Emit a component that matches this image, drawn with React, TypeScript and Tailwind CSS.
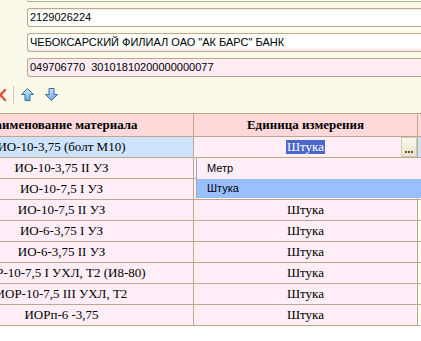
import React from "react";

const rows = [
  "ИО-10-3,75 II УЗ",
  "ИО-10-7,5 I УЗ",
  "ИО-10-7,5 II УЗ",
  "ИО-6-3,75 I УЗ",
  "ИО-6-3,75 II УЗ",
  "ИОР-10-7,5 I УХЛ, Т2 (И8-80)",
  "ИОР-10-7,5 III УХЛ, Т2",
  "ИОРп-6 -3,75",
];

function UpArrow() {
  return (
    <svg width="13" height="13" viewBox="0 0 13 13">
      <defs>
        <linearGradient id="ua" x1="0" y1="0" x2="0" y2="1">
          <stop offset="0" stopColor="#d6ecfc" />
          <stop offset="1" stopColor="#6aa8e0" />
        </linearGradient>
      </defs>
      <path d="M6.5 0.5 L12.5 6.5 L9 6.5 L9 12.5 L4 12.5 L4 6.5 L0.5 6.5 Z" fill="url(#ua)" stroke="#3b6e9e" strokeWidth="1" strokeLinejoin="round" />
    </svg>
  );
}

function DownArrow() {
  return (
    <svg width="13" height="13" viewBox="0 0 13 13">
      <defs>
        <linearGradient id="da" x1="0" y1="0" x2="0" y2="1">
          <stop offset="0" stopColor="#c8e2fa" />
          <stop offset="1" stopColor="#6aa8e0" />
        </linearGradient>
      </defs>
      <path d="M6.5 12.5 L12.5 6.5 L9 6.5 L9 0.5 L4 0.5 L4 6.5 L0.5 6.5 Z" fill="url(#da)" stroke="#3b6e9e" strokeWidth="1" strokeLinejoin="round" />
    </svg>
  );
}

export default function App() {
  const sans = { fontFamily: '"Liberation Sans", Arial, sans-serif' };
  const serif = { fontFamily: '"Liberation Serif", "Times New Roman", serif' };
  return (
    <div className="relative w-[421px] h-[341px] overflow-hidden bg-white" style={sans}>
      {/* form area */}
      <div className="h-[113px] bg-[#fbf9e9] flex flex-col">
        <div className="ml-[27px] h-[2px] border-b border-l border-[#baa98a] bg-white rounded-bl-[3px]" />
        <div className="mt-[6px] ml-[27px] h-[19px] border-y border-l border-[#baa98a] rounded-l-[3px] bg-white shadow-[inset_0_1px_0_#fde6f0] flex items-center pl-[2px] text-[11px] text-black leading-none">
          2129026224
        </div>
        <div className="mt-[6px] ml-[27px] h-[19px] border-y border-l border-[#baa98a] rounded-l-[3px] bg-white shadow-[inset_0_-2px_0_#fde6f0] flex items-center pl-[2px] text-[11px] text-black leading-none whitespace-nowrap">
          ЧЕБОКСАРСКИЙ ФИЛИАЛ ОАО "АК БАРС" БАНК
        </div>
        <div className="mt-[6px] ml-[27px] h-[19px] border-y border-l border-[#baa98a] rounded-l-[3px] bg-[#fdecf4] flex items-center pl-[2px] text-[11px] text-black leading-none whitespace-pre">
          049706770  30101810200000000077
        </div>
        <div className="flex items-start pt-[11px] h-[36px]">
          <svg width="6" height="13" viewBox="0 0 6 13" className="mt-[1px]">
            <path d="M-4 1 L5 11 M5 1 L-4 11" stroke="#e05040" strokeWidth="2.4" strokeLinecap="round" />
          </svg>
          <div className="ml-[7px] -mt-[2px] w-[1px] h-[17px] bg-[#cdc8b0]" />
          <div className="ml-[7px]">
            <UpArrow />
          </div>
          <div className="ml-[11px]">
            <DownArrow />
          </div>
        </div>
      </div>

      {/* table */}
      <div className="ml-[-70px] w-[491px] text-[13px] text-black" style={serif}>
        <div className="flex h-[24px] border-y border-[#baa98a] bg-[#ffd9d9] font-bold">
          <div className="w-[264px] border-r border-[#baa98a] flex items-center justify-center whitespace-nowrap">
            Наименование материала
          </div>
          <div className="w-[224px] border-r border-[#baa98a] flex items-center justify-center whitespace-nowrap">
            Единица измерения
          </div>
          <div className="flex-1" />
        </div>
        <div className="flex h-[21px] border-b border-[#baa98a]">
          <div className="w-[264px] border-r border-[#baa98a] bg-[#cde4fc] flex items-center justify-center whitespace-nowrap">
            ИО-10-3,75 (болт М10)
          </div>
          <div className="relative w-[224px] border-r border-[#baa98a] bg-[#ffeef7] flex items-center justify-center">
            <span className="bg-[#4a68cc] text-white leading-[14px] px-[1px]">Штука</span>
            <div className="absolute right-0 top-0 h-[20px] w-[16px] border border-[#d0ccb8] bg-gradient-to-b from-[#faf8ec] to-[#e8e4cc] flex items-end justify-center pb-[3px] gap-[1px]">
              <span className="w-[2px] h-[2px] bg-[#6a5020]" />
              <span className="w-[2px] h-[2px] bg-[#6a5020]" />
              <span className="w-[2px] h-[2px] bg-[#6a5020]" />
            </div>
          </div>
          <div className="flex-1 bg-[#cde4fc]" />
        </div>
        {rows.map((r, i) => (
          <div key={i} className="flex h-[21px] border-b border-[#baa98a]">
            <div className="w-[264px] border-r border-[#baa98a] bg-[#ffeef7] flex items-center justify-center whitespace-nowrap">
              {r}
            </div>
            <div className="w-[224px] border-r border-[#baa98a] bg-[#ffeef7] flex items-center justify-center">
              Штука
            </div>
            <div className="flex-1 bg-white" />
          </div>
        ))}
      </div>

      {/* dropdown */}
      <div className="absolute left-[196px] top-[158px] w-[240px] border-l border-[#a8a8a8] bg-[#ffeef8] text-[11px] text-black" style={sans}>
        <div className="h-[21px] flex items-center pl-[10px]">Метр</div>
        <div className="h-[19px] flex items-center pl-[10px] bg-[#99bfff]">Штука</div>
      </div>
    </div>
  );
}
